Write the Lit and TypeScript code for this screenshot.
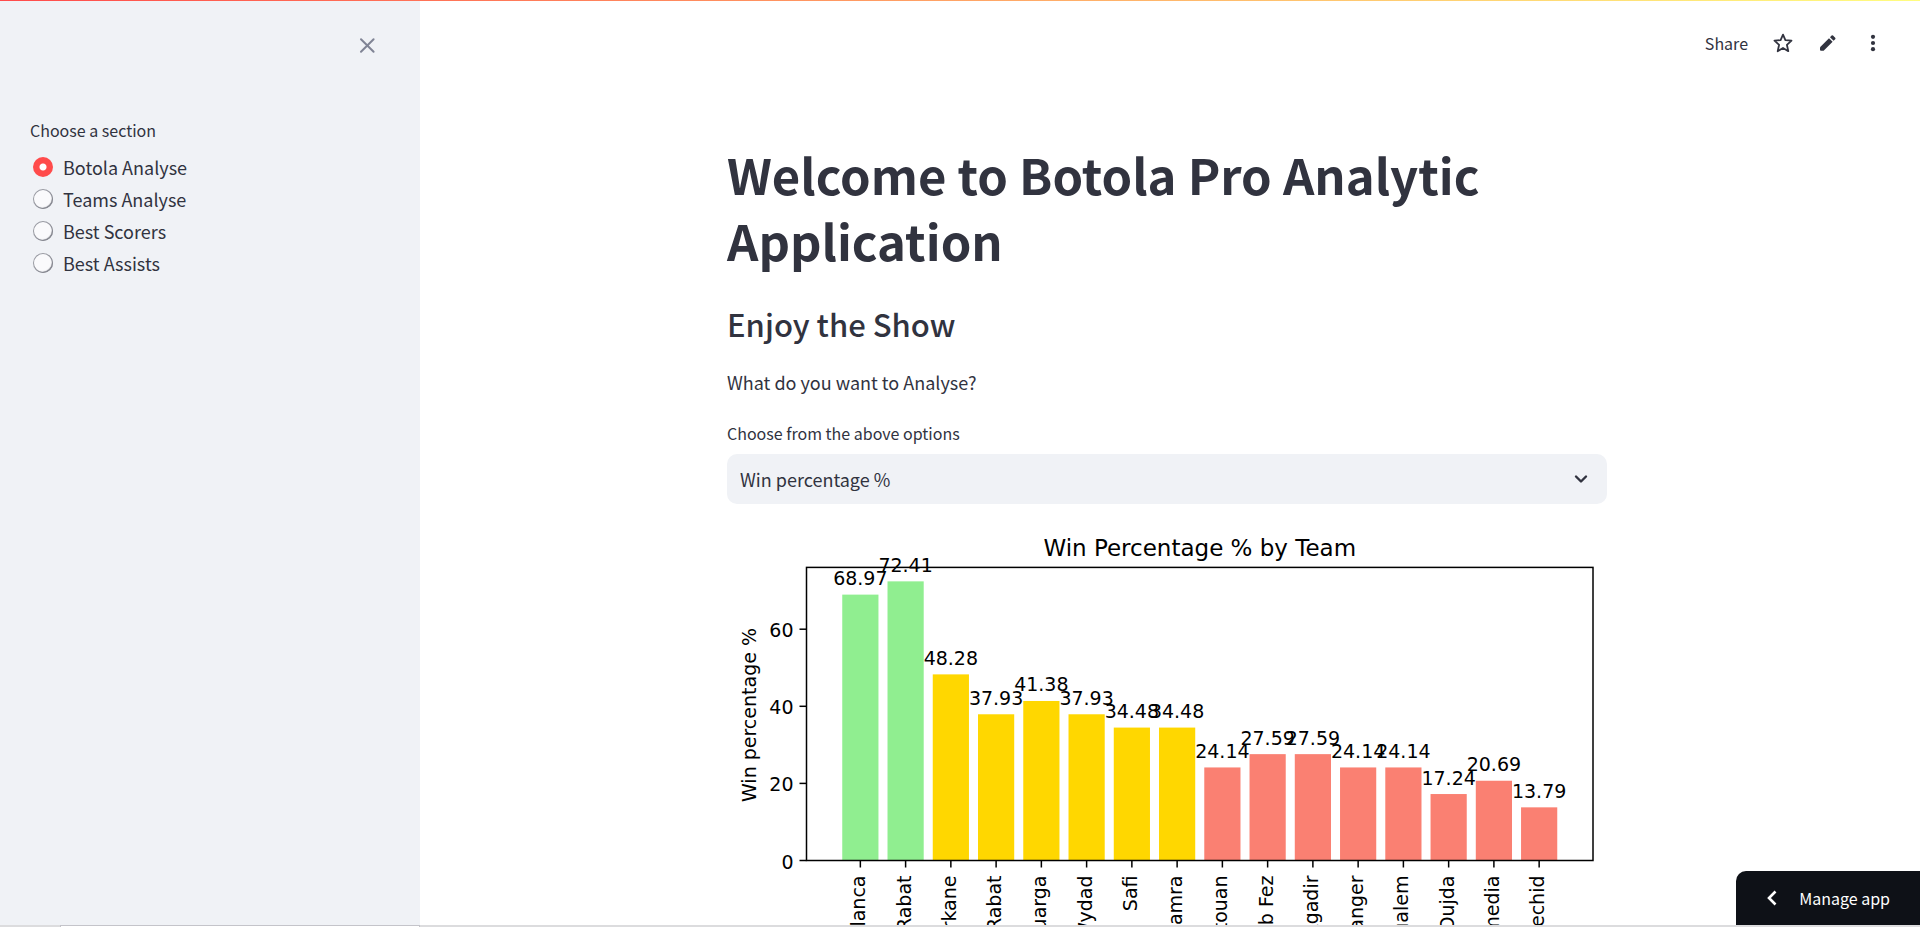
import { LitElement, html, svg, css } from "lit";
import { customElement, state } from "lit/decorators.js";

interface Team {
  name: string;
  win: number;
}

const TEAMS: Team[] = [
  { name: "Raja Casablanca", win: 68.97 },
  { name: "AS FAR Rabat", win: 72.41 },
  { name: "RSB Berkane", win: 48.28 },
  { name: "FUS Rabat", win: 37.93 },
  { name: "Union Touarga", win: 41.38 },
  { name: "Wydad", win: 37.93 },
  { name: "Safi", win: 34.48 },
  { name: "Zemamra", win: 34.48 },
  { name: "Moghreb Tetouan", win: 24.14 },
  { name: "Maghreb Fez", win: 27.59 },
  { name: "Hassania Agadir", win: 27.59 },
  { name: "Ittihad Tanger", win: 24.14 },
  { name: "Jeunesse Soualem", win: 24.14 },
  { name: "Mouloudia Oujda", win: 17.24 },
  { name: "Chabab Mohammedia", win: 20.69 },
  { name: "Youssoufia Berrechid", win: 13.79 },
];

/** Bar chart of the win percentage of each team. */
@customElement("win-chart")
export class WinChart extends LitElement {
  static styles = css`
    :host {
      display: block;
    }
    .chart {
      display: block;
      width: 100%;
      height: auto;
      font-family: "DejaVu Sans", sans-serif;
      font-size: 19px;
    }
    .title {
      font-size: 23px;
    }
    .line {
      fill: none;
      stroke: #000;
      stroke-width: 1.5;
    }
    .high {
      fill: #90ee90;
    }
    .mid {
      fill: #ffd700;
    }
    .low {
      fill: #fa8072;
    }
  `;

  private readonly left = 79.5;
  private readonly right = 866;
  private readonly top = 41.4;
  private readonly base = 334.5;

  private y(value: number) {
    const max = Math.max(...TEAMS.map((t) => t.win)) * 1.05;
    return this.base - (value / max) * (this.base - this.top);
  }

  private x(index: number) {
    // The outer margins hold five hundredths of the data span.
    const unit = (this.right - this.left) / ((TEAMS.length - 0.2) * 1.1);
    return this.left + unit * ((TEAMS.length - 0.2) * 0.05 + 0.4 + index);
  }

  render() {
    const step = this.x(1) - this.x(0);
    const width = step * 0.8;
    return html`
      <svg class="chart" viewBox="0 0 880 520" role="img" aria-label="Win Percentage % by Team">
        ${TEAMS.map(
          (t, i) => svg`<rect
            class=${t.win > 50 ? "high" : t.win > 30 ? "mid" : "low"}
            x=${this.x(i) - width / 2} y=${this.y(t.win)}
            width=${width} height=${this.base - this.y(t.win)} />`
        )}
        <rect class="line" x=${this.left} y=${this.top}
          width=${this.right - this.left} height=${this.base - this.top} />
        ${[0, 20, 40, 60].map(
          (v) => svg`
            <path class="line" d="M${this.left - 7} ${this.y(v)}H${this.left}" />
            <text x=${this.left - 13} y=${this.y(v) + 8} text-anchor="end">${v}</text>`
        )}
        ${TEAMS.map(
          (t, i) => svg`
            <path class="line" d="M${this.x(i)} ${this.base}v7" />
            <text x=${this.x(i)} y=${this.y(t.win) - 9.5} text-anchor="middle">${t.win}</text>
            <text transform="translate(${this.x(i) + 5} ${this.base + 15}) rotate(-90)"
              text-anchor="end">${t.name}</text>`
        )}
        <text class="title" x=${(this.left + this.right) / 2} y="30" text-anchor="middle">
          Win Percentage % by Team
        </text>
        <text transform="translate(29 189) rotate(-90)" text-anchor="middle">Win percentage %</text>
      </svg>
    `;
  }
}

@customElement("app-root")
export class AppRoot extends LitElement {
  static styles = css`
    :host {
      display: flex;
      flex-direction: column;
      height: 100vh;
      overflow: hidden;
      position: relative;
      background: #fff;
      color: #31333f;
      font-family: "Noto Sans CJK SC", "Noto Sans", sans-serif;
      font-size: 18px;
      line-height: 32px;
    }
    * {
      box-sizing: border-box;
    }
    .decoration {
      position: absolute;
      top: 0;
      left: 0;
      right: 0;
      height: 1px;
      background: linear-gradient(90deg, #ff4b4b, #fffd80);
      z-index: 2;
    }
    .layout {
      flex: 1;
      min-height: 0;
      display: flex;
      overflow: hidden;
    }
    .sidebar {
      flex: none;
      width: 420px;
      background: #f0f2f6;
      padding: 30px;
    }
    button {
      display: flex;
      align-items: center;
      border: 0;
      padding: 0;
      margin: 0;
      background: none;
      color: inherit;
      font: inherit;
    }
    .close {
      margin: 0 8px 0 auto;
      color: #808495;
    }
    svg {
      display: block;
    }
    .radios {
      border: 0;
      margin: 56px 0 0;
      padding: 0;
    }
    .radios legend,
    .label {
      padding: 0;
      font-size: 16px;
      line-height: 28px;
    }
    .radios legend {
      margin-bottom: 7px;
    }
    .radio {
      display: flex;
      align-items: center;
      gap: 10px;
      padding-left: 3px;
    }
    .radio input {
      appearance: none;
      flex: none;
      width: 20px;
      height: 20px;
      margin: 0;
      border-radius: 50%;
      background: #fafafc;
      box-shadow: inset -1px -1px 1px #85878f, inset 0 0 0 1px #999ba3;
    }
    .radio input:checked {
      background: radial-gradient(circle, #fff 3px, #ff4b4b 4px);
      box-shadow: none;
    }
    .main {
      flex: 1;
      min-width: 0;
      overflow: hidden;
      position: relative;
      padding: 0 26px 0 20px;
    }
    .toolbar {
      position: absolute;
      top: 27px;
      right: 37px;
      display: flex;
      align-items: center;
      gap: 25px;
      font-size: 16px;
      line-height: 32px;
    }
    .content {
      max-width: 880px;
      margin: 0 auto;
      padding-top: 141px;
    }
    h1 {
      margin: 0;
      font-size: 49px;
      line-height: 66px;
      font-weight: 700;
    }
    h2 {
      margin: 29px 0 0;
      font-size: 31px;
      line-height: 44px;
      font-weight: 500;
    }
    p {
      margin: 20px 0 21px;
    }
    .label {
      display: block;
      margin-bottom: 7px;
    }
    .select {
      display: grid;
      align-items: center;
      margin-bottom: 22px;
    }
    .select select,
    .select svg {
      grid-area: 1 / 1;
    }
    .select select {
      appearance: none;
      width: 100%;
      height: 50px;
      border: 0;
      border-radius: 10px;
      padding: 0 40px 0 13px;
      background: #f0f2f6;
      color: inherit;
      font: inherit;
    }
    .select svg {
      justify-self: end;
      margin-right: 13px;
      pointer-events: none;
    }
    .manage {
      position: absolute;
      right: 0;
      bottom: 2px;
      height: 54px;
      padding: 0 30px 0 23px;
      gap: 14px;
      border-radius: 10px 0 0 0;
      background: #0e1117;
      color: #fff;
      font-size: 16px;
      font-weight: 400;
    }
    .edge {
      flex: none;
      height: 2px;
      background: #dcdcde;
      padding-left: 60px;
    }
    .tab {
      width: 360px;
      height: 2px;
      border: 1px solid #c4c4ca;
      border-bottom: 0;
      background: #fff;
    }
  `;

  @state() private section = "Botola Analyse";

  render() {
    const sections = ["Botola Analyse", "Teams Analyse", "Best Scorers", "Best Assists"];
    return html`
      <div class="decoration"></div>
      <div class="layout">
        <aside class="sidebar">
          <button class="close" aria-label="Close sidebar">
            <svg width="30" height="30" viewBox="0 0 30 30" fill="none" stroke="currentColor"
              stroke-width="2" stroke-linecap="round">
              <path d="M9 9.2 21.6 21.8M21.6 9.2 9 21.8" />
            </svg>
          </button>
          <fieldset class="radios">
            <legend>Choose a section</legend>
            ${sections.map(
              (s) => html`<label class="radio">
                <input type="radio" name="section" .checked=${s === this.section}
                  @change=${() => (this.section = s)} />
                <span>${s}</span>
              </label>`
            )}
          </fieldset>
        </aside>
        <main class="main">
          <div class="toolbar">
            <button>Share</button>
            <button aria-label="Favorite">
              <svg width="20" height="20" viewBox="0 0 20 20" fill="none" stroke="currentColor"
                stroke-width="1.8" stroke-linejoin="round">
                <path d="M10 1.6 12.4 7.1 18.5 7.7 13.9 11.8 15.3 18.2 10 14.9 4.7 18.2 6.1 11.8 1.5 7.7 7.6 7.1Z" />
              </svg>
            </button>
            <button aria-label="Edit source">
              <svg width="20" height="20" viewBox="0 0 20 20" fill="currentColor">
                <path d="M2 14.2 11 5.2 14.6 8.8 5.6 17.8H3Q2 17.8 2 16.8Z" />
                <path d="M12 4.2 13.6 2.6Q14.3 1.9 15 2.6L17.2 4.8Q17.9 5.5 17.2 6.2L15.6 7.8Z" />
              </svg>
            </button>
            <button aria-label="Menu">
              <svg width="20" height="20" viewBox="0 0 20 20" fill="currentColor">
                <circle cx="10" cy="3.8" r="2.1" />
                <circle cx="10" cy="10" r="2.1" />
                <circle cx="10" cy="16.2" r="2.1" />
              </svg>
            </button>
          </div>
          <div class="content">
            <h1>Welcome to Botola Pro Analytic Application</h1>
            <h2>Enjoy the Show</h2>
            <p>What do you want to Analyse?</p>
            <label class="label" for="metric">Choose from the above options</label>
            <div class="select">
              <select id="metric">
                <option>Win percentage %</option>
              </select>
              <svg width="26" height="26" viewBox="0 0 26 26" fill="none" stroke="currentColor"
                stroke-width="2.4" stroke-linecap="round" stroke-linejoin="round">
                <path d="M8 10.5 13 15.5 18 10.5" />
              </svg>
            </div>
            <win-chart></win-chart>
          </div>
        </main>
      </div>
      <button class="manage">
        <svg width="26" height="26" viewBox="0 0 26 26" fill="none" stroke="currentColor"
          stroke-width="2.6">
          <path d="M16.5 6.5 10 13 16.5 19.5" />
        </svg>
        <span>Manage app</span>
      </button>
      <div class="edge"><div class="tab"></div></div>
    `;
  }
}
